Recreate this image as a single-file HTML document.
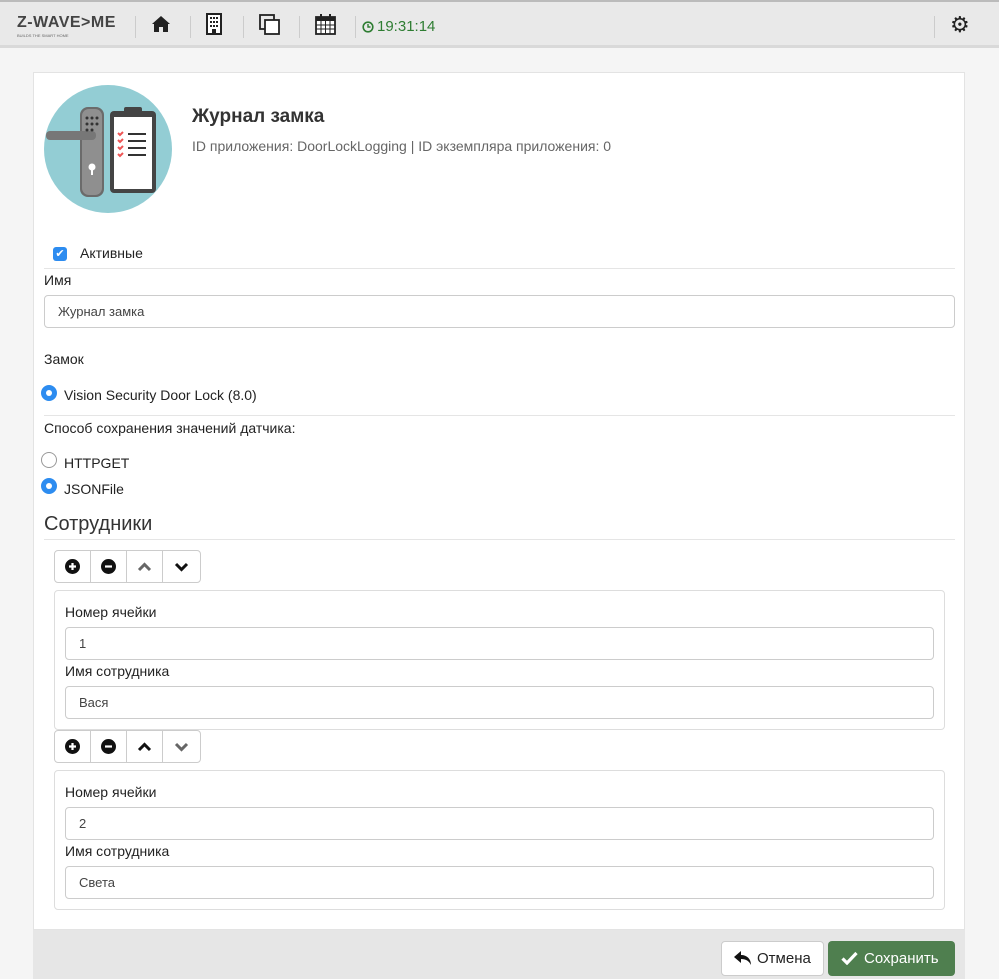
<!DOCTYPE html>
<html><head><meta charset="utf-8"><style>
*{box-sizing:border-box}
body{margin:0;width:999px;height:979px;background:#f5f5f5;font-family:"Liberation Sans",Arial,sans-serif;color:#222;font-size:14px;position:relative;overflow:hidden}
.hdr{position:absolute;left:0;top:0;width:999px;height:48px;background:#e9e9e9;border-top:2px solid #bbb;border-bottom:3px solid #d9d9d9}
.sep{position:absolute;top:14px;width:1px;height:22px;background:#ccc}
.panel{position:absolute;left:33px;top:72px;width:932px;height:858px;background:#fff;border:1px solid #e3e3e3}
.foot{position:absolute;left:33px;top:930px;width:932px;height:49px;background:#e6e6e6}
.a{position:absolute}
.inp{position:absolute;height:33px;border:1px solid #ccc;border-radius:4px;padding-left:13px;line-height:31px;font-size:13px;color:#444}
.hr{position:absolute;height:1px;background:#e5e5e5}
.radio{position:absolute;width:16px;height:16px;border-radius:50%}
.on{background:#2d8cf0;border:1px solid #2d8cf0}
.on:after{content:"";position:absolute;left:4px;top:4px;width:6px;height:6px;border-radius:50%;background:#fff}
.off{border:1px solid #999;background:#fff}
.btns{position:absolute;width:147px;height:33px;border:1px solid #ccc;border-radius:4px;display:flex}
.btns div{width:36px;border-right:1px solid #ccc;display:flex;align-items:center;justify-content:center}
.btns div:last-child{border-right:none;width:37px}
.box{position:absolute;left:54px;width:891px;border:1px solid #ddd;border-radius:4px}
</style></head><body>
<div class="hdr">
 <div class="a" style="left:17px;top:12px;font-weight:bold;font-size:16px;color:#444;letter-spacing:0.5px">Z-WAVE&gt;ME</div>
 <div class="a" style="left:17px;top:31px;font-size:4px;color:#666">BUILDS THE SMART HOME</div>
 <div class="sep" style="left:135px"></div>
 <svg class="a" style="left:151px;top:13px" width="20" height="18" viewBox="0 0 20 18"><path d="M10 1 L1 9 L3 9 L3 17 L8 17 L8 12 L12 12 L12 17 L17 17 L17 9 L19 9 Z" fill="#222"/></svg>
 <div class="sep" style="left:190px"></div>
 <svg class="a" style="left:206px;top:11px" width="16" height="22"><rect x="1" y="1" width="14" height="20" fill="#fff" stroke="#222" stroke-width="2"/><g fill="#222"><rect x="4" y="4" width="2" height="2"/><rect x="7" y="4" width="2" height="2"/><rect x="10" y="4" width="2" height="2"/><rect x="4" y="8" width="2" height="2"/><rect x="7" y="8" width="2" height="2"/><rect x="10" y="8" width="2" height="2"/><rect x="4" y="12" width="2" height="2"/><rect x="7" y="12" width="2" height="2"/><rect x="10" y="12" width="2" height="2"/><rect x="6" y="16" width="4" height="5"/></g></svg>
 <div class="sep" style="left:243px"></div>
 <svg class="a" style="left:259px;top:12px" width="22" height="22"><rect x="1" y="1" width="14" height="14" fill="none" stroke="#222" stroke-width="1.8"/><rect x="6" y="6" width="14" height="14" fill="#fff" stroke="#222" stroke-width="1.8"/></svg>
 <div class="sep" style="left:299px"></div>
 <svg class="a" style="left:315px;top:12px" width="21" height="21"><rect x="1" y="3" width="19" height="17" fill="#fff" stroke="#222" stroke-width="1.8"/><rect x="1" y="3" width="19" height="4" fill="#222"/><rect x="5" y="0" width="2" height="5" fill="#222"/><rect x="14" y="0" width="2" height="5" fill="#222"/><path d="M1 11H20M1 15H20M6 7V20M10.5 7V20M15 7V20" stroke="#222" stroke-width="1"/></svg>
 <div class="sep" style="left:355px"></div>
 <svg class="a" style="left:362px;top:19px" width="12" height="12"><circle cx="6" cy="6" r="4.8" fill="none" stroke="#2e7d32" stroke-width="1.6"/><path d="M6 3V6H8.5" stroke="#2e7d32" stroke-width="1.4" fill="none"/></svg>
 <div class="a" style="left:377px;top:16px;color:#2e7d32;font-size:15px">19:31:14</div>
 <div class="sep" style="left:934px"></div>
 <div class="a" style="left:950px;top:10px;font-size:22px;color:#222">&#9881;</div>
</div>
<div class="panel"></div>
<svg class="a" style="left:44px;top:85px" width="128" height="128" viewBox="0 0 128 128">
 <circle cx="64" cy="64" r="64" fill="#93cdd4"/>
 <rect x="36" y="22" width="24" height="90" rx="8" fill="#6b6b6b"/><rect x="38" y="24" width="20" height="86" rx="7" fill="#8f8f8f"/>
 <rect x="2" y="46" width="50" height="9" rx="4" fill="#777"/>
 <g fill="#333"><circle cx="43" cy="33" r="1.5"/><circle cx="48" cy="33" r="1.5"/><circle cx="53" cy="33" r="1.5"/><circle cx="43" cy="39" r="1.5"/><circle cx="48" cy="39" r="1.5"/><circle cx="53" cy="39" r="1.5"/><circle cx="43" cy="45" r="1.5"/><circle cx="48" cy="45" r="1.5"/></g>
 <circle cx="48" cy="82" r="3.5" fill="#fff"/><rect x="47" y="82" width="2" height="8" fill="#fff"/>
 <rect x="66" y="26" width="46" height="82" rx="4" fill="#444"/><rect x="70" y="32" width="38" height="72" fill="#fff"/>
 <rect x="80" y="22" width="18" height="8" rx="2" fill="#444"/>
 <g stroke="#e55" stroke-width="2" fill="none"><path d="M74 48l2 2 3-3M74 55l2 2 3-3M74 62l2 2 3-3M74 69l2 2 3-3"/></g>
 <g stroke="#333" stroke-width="2"><path d="M84 49H102M84 56H102M84 63H102M84 70H102"/></g>
</svg>
<div class="a" style="left:192px;top:106px;font-size:19px;font-weight:bold;color:#333">Журнал замка</div>
<div class="a" style="left:192px;top:138px;font-size:14px;color:#666">ID приложения: DoorLockLogging | ID экземпляра приложения: 0</div>
<div class="a" style="left:53px;top:247px;width:14px;height:14px;background:#2d8cf0;border-radius:3px;color:#fff;font-size:11px;line-height:14px;text-align:center">&#10004;</div>
<div class="a" style="left:80px;top:245px">Активные</div>
<div class="hr" style="left:44px;top:268px;width:911px"></div>
<div class="a" style="left:44px;top:272px">Имя</div>
<div class="inp" style="left:44px;top:295px;width:911px">Журнал замка</div>
<div class="a" style="left:44px;top:351px">Замок</div>
<div class="radio on" style="left:41px;top:385px"></div>
<div class="a" style="left:64px;top:387px">Vision Security Door Lock (8.0)</div>
<div class="hr" style="left:44px;top:415px;width:911px"></div>
<div class="a" style="left:44px;top:420px">Способ сохранения значений датчика:</div>
<div class="radio off" style="left:41px;top:452px"></div>
<div class="a" style="left:64px;top:455px">HTTPGET</div>
<div class="radio on" style="left:41px;top:478px"></div>
<div class="a" style="left:64px;top:481px">JSONFile</div>
<div class="a" style="left:44px;top:513px;font-size:20px;color:#333">Сотрудники</div>
<div class="hr" style="left:44px;top:539px;width:911px"></div>

<div class="btns" style="left:54px;top:550px">
 <div><svg width="15" height="15"><circle cx="7.5" cy="7.5" r="7.5" fill="#111"/><path d="M7.5 4V11M4 7.5H11" stroke="#fff" stroke-width="2.2"/></svg></div>
 <div><svg width="15" height="15"><circle cx="7.5" cy="7.5" r="7.5" fill="#111"/><path d="M4 7.5H11" stroke="#fff" stroke-width="2.2"/></svg></div>
 <div><svg width="15" height="10"><path d="M2 8L7.5 2.5L13 8" fill="none" stroke="#666" stroke-width="3"/></svg></div>
 <div><svg width="15" height="10"><path d="M2 2L7.5 7.5L13 2" fill="none" stroke="#111" stroke-width="3"/></svg></div>
</div>
<div class="box" style="top:590px;height:140px">
 <div class="a" style="left:10px;top:13px">Номер ячейки</div>
 <div class="inp" style="left:10px;top:36px;width:869px">1</div>
 <div class="a" style="left:10px;top:72px">Имя сотрудника</div>
 <div class="inp" style="left:10px;top:95px;width:869px">Вася</div>
</div>
<div class="btns" style="left:54px;top:730px">
 <div><svg width="15" height="15"><circle cx="7.5" cy="7.5" r="7.5" fill="#111"/><path d="M7.5 4V11M4 7.5H11" stroke="#fff" stroke-width="2.2"/></svg></div>
 <div><svg width="15" height="15"><circle cx="7.5" cy="7.5" r="7.5" fill="#111"/><path d="M4 7.5H11" stroke="#fff" stroke-width="2.2"/></svg></div>
 <div><svg width="15" height="10"><path d="M2 8L7.5 2.5L13 8" fill="none" stroke="#111" stroke-width="3"/></svg></div>
 <div><svg width="15" height="10"><path d="M2 2L7.5 7.5L13 2" fill="none" stroke="#666" stroke-width="3"/></svg></div>
</div>
<div class="box" style="top:770px;height:140px">
 <div class="a" style="left:10px;top:13px">Номер ячейки</div>
 <div class="inp" style="left:10px;top:36px;width:869px">2</div>
 <div class="a" style="left:10px;top:72px">Имя сотрудника</div>
 <div class="inp" style="left:10px;top:95px;width:869px">Света</div>
</div>
<div class="foot"></div>
<div class="a" style="left:721px;top:941px;width:103px;height:35px;background:#fff;border:1px solid #ccc;border-radius:4px;font-size:15px">
 <svg class="a" style="left:12px;top:9px" width="18" height="15"><path d="M7 0L0 6L7 12V8C12 8 15 10 17 14C17 8 13 4 7 4Z" fill="#111"/></svg>
 <span class="a" style="left:35px;top:8px">Отмена</span></div>
<div class="a" style="left:828px;top:941px;width:127px;height:35px;background:#4f7f4f;border-radius:4px;color:#fff;font-size:15px">
 <svg class="a" style="left:13px;top:10px" width="17" height="14"><path d="M1.5 7.5L6 12L15.5 2" fill="none" stroke="#fff" stroke-width="3.2"/></svg>
 <span class="a" style="left:36px;top:9px">Сохранить</span></div>
</body></html>
